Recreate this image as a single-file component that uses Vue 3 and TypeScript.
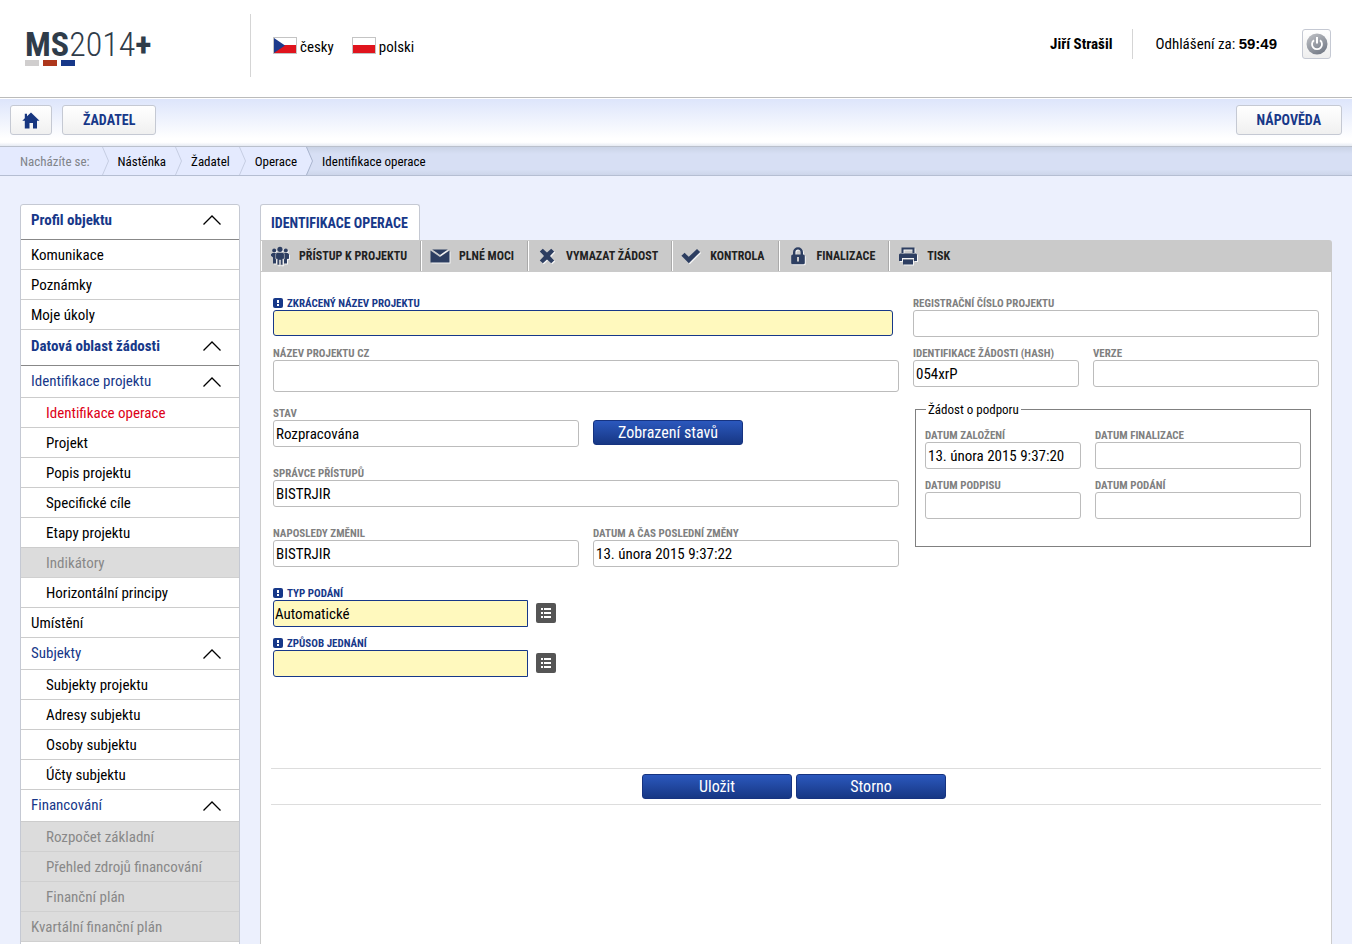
<script setup lang="ts">
import { ref } from 'vue'

type RowKind = 'section' | 'group' | 'item' | 'sub'
interface NavRow {
  text: string
  kind: RowKind
  disabled?: boolean
  active?: boolean
}

const nav: NavRow[] = [
  { text: 'Profil objektu', kind: 'section' },
  { text: 'Komunikace', kind: 'item' },
  { text: 'Poznámky', kind: 'item' },
  { text: 'Moje úkoly', kind: 'item' },
  { text: 'Datová oblast žádosti', kind: 'section' },
  { text: 'Identifikace projektu', kind: 'group' },
  { text: 'Identifikace operace', kind: 'sub', active: true },
  { text: 'Projekt', kind: 'sub' },
  { text: 'Popis projektu', kind: 'sub' },
  { text: 'Specifické cíle', kind: 'sub' },
  { text: 'Etapy projektu', kind: 'sub' },
  { text: 'Indikátory', kind: 'sub', disabled: true },
  { text: 'Horizontální principy', kind: 'sub' },
  { text: 'Umístění', kind: 'item' },
  { text: 'Subjekty', kind: 'group' },
  { text: 'Subjekty projektu', kind: 'sub' },
  { text: 'Adresy subjektu', kind: 'sub' },
  { text: 'Osoby subjektu', kind: 'sub' },
  { text: 'Účty subjektu', kind: 'sub' },
  { text: 'Financování', kind: 'group' },
  { text: 'Rozpočet základní', kind: 'sub', disabled: true },
  { text: 'Přehled zdrojů financování', kind: 'sub', disabled: true },
  { text: 'Finanční plán', kind: 'sub', disabled: true },
  { text: 'Kvartální finanční plán', kind: 'item', disabled: true },
]

const tools = [
  { text: 'PŘÍSTUP K PROJEKTU', icon: 'people' },
  { text: 'PLNÉ MOCI', icon: 'mail' },
  { text: 'VYMAZAT ŽÁDOST', icon: 'cross' },
  { text: 'KONTROLA', icon: 'check' },
  { text: 'FINALIZACE', icon: 'lock' },
  { text: 'TISK', icon: 'print' },
]

const crumbs = ['Nástěnka', 'Žadatel', 'Operace']

const form = ref({
  shortName: '',
  nameCz: '',
  state: 'Rozpracována',
  manager: 'BISTRJIR',
  changedBy: 'BISTRJIR',
  changedAt: '13. února 2015 9:37:22',
  submission: 'Automatické',
  acting: '',
  regNumber: '',
  hash: '054xrP',
  version: '',
  created: '13. února 2015 9:37:20',
  finalized: '',
  signed: '',
  submitted: '',
})
</script>

<template>
  <div class="page">
    <header class="top">
      <a class="logo" href="#" aria-label="MS2014+">
        <span class="logo-text"><b>MS</b><span class="thin">2014</span><b>+</b></span>
        <span class="bars"><i class="bar grey"></i><i class="bar red"></i><i class="bar blue"></i></span>
      </a>
      <div class="langs">
        <a href="#" class="lang">
          <svg width="24" height="17" viewBox="0 0 24 17" aria-hidden="true">
            <rect x=".5" y=".5" width="23" height="16" fill="#fff" stroke="#c4c4c4" />
            <rect x="1" y="8" width="22" height="8" fill="#e0141d" />
            <path d="M1 1 12 8.500 1 16Z" fill="#1c3a8c" />
          </svg>
          <span>česky</span>
        </a>
        <a href="#" class="lang">
          <svg width="24" height="17" viewBox="0 0 24 17" aria-hidden="true">
            <rect x=".5" y=".5" width="23" height="16" fill="#fff" stroke="#c4c4c4" />
            <rect x="1" y="8" width="22" height="8" fill="#e0141d" />
          </svg>
          <span>polski</span>
        </a>
      </div>
      <div class="user">
        <b class="user-name">Jiří Strašil</b>
        <span class="timer">Odhlášení za: <b class="clock">59:49</b></span>
        <button type="button" class="power" aria-label="Odhlásit">
          <svg width="22" height="22" viewBox="0 0 22 22" aria-hidden="true">
            <defs>
              <linearGradient id="pw" x1="0" y1="0" x2="0.600" y2="1">
                <stop offset="0" stop-color="#c3c5c9" />
                <stop offset="1" stop-color="#777d89" />
              </linearGradient>
            </defs>
            <circle cx="11" cy="11" r="10.500" fill="url(#pw)" />
            <path d="M8 7.200A5 5 0 1 0 14 7.200" fill="none" stroke="#fff" stroke-width="1.800" />
            <path d="M11 4v6.500" stroke="#fff" stroke-width="2" />
          </svg>
        </button>
      </div>
    </header>

    <nav class="menu">
      <button type="button" class="menu-btn home" aria-label="Domů">
        <svg width="18" height="17" viewBox="0 0 18 17" aria-hidden="true">
          <path d="M9 .5 17.500 8.700H15V16.500H11V11H7.500V16.500H2.800V8.700H.3L2.800 6.200V1.800H5V4.200Z" fill="#173680" />
        </svg>
      </button>
      <button type="button" class="menu-btn">ŽADATEL</button>
      <button type="button" class="menu-btn help">NÁPOVĚDA</button>
    </nav>

    <nav class="crumbs" aria-label="Drobečková navigace">
      <span class="crumb lead">Nacházíte se:</span>
      <template v-for="c in crumbs" :key="c">
        <svg class="sep" width="7" height="28" viewBox="0 0 7 28" aria-hidden="true">
          <path d="M.5 0 6.500 14 .5 28" fill="none" stroke="#c6cde2" />
        </svg>
        <a href="#" class="crumb">{{ c }}</a>
      </template>
      <span class="current">
        <svg class="sep" width="7" height="28" viewBox="0 0 7 28" aria-hidden="true">
          <path d="M0 0 6.500 14 0 28Z" fill="#e4eafe" />
          <path d="M.5 0 6.500 14 .5 28" fill="none" stroke="#a9b4cd" />
        </svg>
        <span class="crumb">Identifikace operace</span>
      </span>
    </nav>

    <div class="body">
      <aside class="side">
        <a
          v-for="row in nav"
          :key="row.text"
          href="#"
          class="row"
          :class="[row.kind, { off: row.disabled, active: row.active }]"
        >
          <span>{{ row.text }}</span>
          <svg v-if="row.kind === 'section' || row.kind === 'group'" width="20" height="12" viewBox="0 0 20 12" aria-hidden="true">
            <path d="M1.500 10.500 10 2l8.500 8.500" fill="none" stroke="#000" stroke-width="1.300" />
          </svg>
        </a>
        <div class="row item"></div>
      </aside>

      <main class="main">
        <h1 class="tab">IDENTIFIKACE OPERACE</h1>
        <div class="toolbar">
          <button v-for="t in tools" :key="t.text" type="button" class="tool">
            <svg width="20" height="20" viewBox="0 0 20 20" class="tool-icon" aria-hidden="true">
              <g v-if="t.icon === 'people'">
                <circle cx="10" cy="3.300" r="2.600" />
                <circle cx="4.200" cy="4.500" r="2" />
                <circle cx="15.800" cy="4.500" r="2" />
                <path d="M1 8.200 2.500 7H6v10.500H3V11.500L1 9.800ZM14 7h3.500L19 8.200v4.500L17 13v4.500H14Z" />
                <path d="M6.800 6.500h6.400l1.200 1.500v5H12.800v6H10.600v-5H9.400v5H7.200v-6H5.600V8Z" stroke="#cacaca" stroke-width=".6" />
              </g>
              <g v-else-if="t.icon === 'mail'">
                <path d="M.5 4.500 10 11l9.500-6.500v12H.5Z" />
                <path d="M2.200 3.500h15.600L10 8.900Z" />
              </g>
              <path v-else-if="t.icon === 'cross'" d="M2.800 5.600 5.800 2.700 10 6.600l4.200-3.900 3 2.900L13 10l4.200 4.400-3 2.900L10 13.400l-4.200 3.900-3-2.900L7 10Z" />
              <path v-else-if="t.icon === 'check'" d="M.4 9.800 3.600 6.800 7.800 10.800 16 2.900l3.200 3L7.800 17.200Z" />
              <g v-else-if="t.icon === 'lock'">
                <path d="M6.200 9V6.200a3.800 3.800 0 0 1 7.600 0V9" fill="none" stroke="#2d3e61" stroke-width="2.400" />
                <rect x="3.200" y="8.500" width="13.600" height="9.800" rx="1.500" />
                <path d="M9 11h2v4.500H9Z" fill="#cacaca" />
              </g>
              <g v-else>
                <path d="M4.500 7V2.500h11V7" fill="none" stroke="#2d3e61" stroke-width="2" />
                <path d="M2 7.500h16l1 1V15h-3v-3H4v3H1V8.500Z" />
                <rect x="5" y="13.500" width="10" height="5" />
              </g>
            </svg>
            <span>{{ t.text }}</span>
          </button>
        </div>

        <form class="panel" @submit.prevent>
          <div class="cols">
            <div class="left">
              <div class="field narrowed">
                <label class="req" for="shortName"><i class="mark"></i>ZKRÁCENÝ NÁZEV PROJEKTU</label>
                <input id="shortName" v-model="form.shortName" class="need low" type="text" />
              </div>
              <div class="field tall">
                <label for="nameCz">NÁZEV PROJEKTU CZ</label>
                <textarea id="nameCz" v-model="form.nameCz" rows="1"></textarea>
              </div>
              <div class="pair tall">
                <div class="field">
                  <label for="state">STAV</label>
                  <input id="state" v-model="form.state" type="text" />
                </div>
                <button type="button" class="primary state-btn">Zobrazení stavů</button>
              </div>
              <div class="field tall">
                <label for="manager">SPRÁVCE PŘÍSTUPŮ</label>
                <input id="manager" v-model="form.manager" type="text" />
              </div>
              <div class="pair tall">
                <div class="field">
                  <label for="changedBy">NAPOSLEDY ZMĚNIL</label>
                  <input id="changedBy" v-model="form.changedBy" type="text" />
                </div>
                <div class="field">
                  <label for="changedAt">DATUM A ČAS POSLEDNÍ ZMĚNY</label>
                  <input id="changedAt" v-model="form.changedAt" type="text" />
                </div>
              </div>
              <div class="field">
                <label class="req" for="submission"><i class="mark"></i>TYP PODÁNÍ</label>
                <div class="pick">
                  <input id="submission" v-model="form.submission" class="need" type="text" />
                  <button type="button" class="list-btn" aria-label="Vybrat typ podání">
                    <svg width="20" height="20" viewBox="0 0 20 20" aria-hidden="true">
                      <path d="M5 5h2v2H5zM8 5h7v2H8zM5 9h2v2H5zM8 9h7v2H8zM5 13h2v2H5zM8 13h7v2H8z" fill="#fff" />
                    </svg>
                  </button>
                </div>
              </div>
              <div class="field">
                <label class="req" for="acting"><i class="mark"></i>ZPŮSOB JEDNÁNÍ</label>
                <div class="pick">
                  <input id="acting" v-model="form.acting" class="need" type="text" />
                  <button type="button" class="list-btn" aria-label="Vybrat způsob jednání">
                    <svg width="20" height="20" viewBox="0 0 20 20" aria-hidden="true">
                      <path d="M5 5h2v2H5zM8 5h7v2H8zM5 9h2v2H5zM8 9h7v2H8zM5 13h2v2H5zM8 13h7v2H8z" fill="#fff" />
                    </svg>
                  </button>
                </div>
              </div>
            </div>

            <div class="right">
              <div class="field">
                <label for="regNumber">REGISTRAČNÍ ČÍSLO PROJEKTU</label>
                <input id="regNumber" v-model="form.regNumber" type="text" />
              </div>
              <div class="split">
                <div class="field">
                  <label for="hash">IDENTIFIKACE ŽÁDOSTI (HASH)</label>
                  <input id="hash" v-model="form.hash" type="text" />
                </div>
                <div class="field">
                  <label for="version">VERZE</label>
                  <input id="version" v-model="form.version" type="text" />
                </div>
              </div>
              <fieldset class="request">
                <legend>Žádost o podporu</legend>
                <div class="dates">
                  <div class="field">
                    <label for="created">DATUM ZALOŽENÍ</label>
                    <input id="created" v-model="form.created" type="text" />
                  </div>
                  <div class="field">
                    <label for="finalized">DATUM FINALIZACE</label>
                    <input id="finalized" v-model="form.finalized" type="text" />
                  </div>
                  <div class="field">
                    <label for="signed">DATUM PODPISU</label>
                    <input id="signed" v-model="form.signed" type="text" />
                  </div>
                  <div class="field">
                    <label for="submitted">DATUM PODÁNÍ</label>
                    <input id="submitted" v-model="form.submitted" type="text" />
                  </div>
                </div>
              </fieldset>
            </div>
          </div>
          <div class="actions">
            <button type="submit" class="primary">Uložit</button>
            <button type="button" class="primary">Storno</button>
          </div>
        </form>
      </main>
    </div>
  </div>
</template>

<style>
html,
body,
#app {
  height: 100%;
}
body {
  margin: 0;
  overflow: hidden;
  background: #ecf0fd;
}
</style>

<style scoped>
.page {
  display: flex;
  flex-direction: column;
  min-height: 100%;
  font-family: "Roboto Condensed", "Liberation Sans Narrow", Roboto, sans-serif;
  font-size: 15px;
  line-height: 20px;
  color: #000;
}
.page * {
  box-sizing: border-box;
}
a {
  color: inherit;
  text-decoration: none;
}
button,
input,
textarea {
  font: inherit;
  color: inherit;
  margin: 0;
}
svg {
  display: block;
  flex: none;
}

.top {
  display: flex;
  align-items: center;
  height: 98px;
  padding: 0 21px 0 25px;
  background: #fff;
  border-bottom: 1px solid #bbb;
}
.logo {
  display: block;
  width: 225px;
  margin-bottom: 3px;
  color: #2f3c4a;
}
.logo-text {
  display: block;
  font-size: 34px;
  line-height: 31px;
}
.thin {
  font-weight: 300;
}
.bars {
  display: flex;
  gap: 4px;
}
.bar {
  width: 14px;
  height: 6px;
}
.grey { background: #d0cece; }
.red { background: #ae371c; }
.blue { background: #173889; }
.langs {
  display: flex;
  align-items: center;
  gap: 18px;
  height: 63px;
  margin-bottom: 6px;
  padding-left: 22px;
  border-left: 1px solid #d5d5d5;
}
.lang {
  display: flex;
  align-items: center;
  gap: 3px;
}
.lang span {
  padding-top: 2px;
}
.user {
  display: flex;
  align-items: center;
  margin: 0 0 10px auto;
}
.timer {
  margin-left: 20px;
  padding-left: 22px;
  border-left: 1px solid #d5d5d5;
  line-height: 30px;
}
.clock {
  font-family: "Liberation Sans", Arial, sans-serif;
}
.power {
  display: flex;
  align-items: center;
  justify-content: center;
  width: 29px;
  height: 30px;
  margin-left: 25px;
  padding: 0;
  border: 1px solid #c5c9d3;
  border-radius: 3px;
  background: linear-gradient(#fff, #eee);
}

.menu {
  display: flex;
  gap: 10px;
  height: 49px;
  padding: 6px 10px 0;
  border-top: 1px solid #fff;
  border-bottom: 1px solid #bac0cc;
  background: linear-gradient(#dde5fb, #fff 84%, #fff 92%, #e6eaf3);
}
.menu-btn {
  height: 30px;
  padding: 0 20px;
  border: 1px solid #c5c9d3;
  border-radius: 3px;
  background: linear-gradient(#fff, #f0f0f0);
  color: #173889;
  font-size: 14px;
  font-weight: 700;
}
.home {
  padding: 0 11px;
}
.help {
  margin-left: auto;
}

.crumbs {
  display: flex;
  height: 29px;
  padding-left: 20px;
  border-bottom: 1px solid #b5bed2;
  background: #e4eafe;
  font-size: 13px;
  line-height: 29px;
}
.crumb {
  padding: 0 9px;
}
.lead {
  padding: 0 12px 0 0;
  color: #808489;
}
.current {
  display: flex;
  flex: 1;
  background: linear-gradient(#cad3e6, #d7dff4 25%, #d7dff4 80%, #cdd6ea);
}

.body {
  display: flex;
  flex: 1;
  align-items: stretch;
  gap: 20px;
  padding: 28px 20px 0;
}
.side {
  flex: 0 0 220px;
  border: 1px solid #c5c9d3;
  border-radius: 3px 3px 0 0;
  background: #fff;
}
.row {
  display: flex;
  justify-content: space-between;
  height: 30px;
  padding: 0 17px 0 10px;
  border-bottom: 1px solid #ccc;
  line-height: 30px;
}
.row svg {
  margin-top: 10px;
}
.section {
  height: 36px;
  padding-top: 1px;
  border-color: #888;
  color: #173889;
  font-weight: 700;
}
.section svg {
  margin-top: 9px;
}
.section:first-child {
  height: 35px;
  padding-top: 0;
}
.group {
  height: 32px;
  color: #173889;
}
.sub {
  padding-left: 25px;
}
.active {
  color: #dd0018;
}
.off {
  background: #dcdcdc;
  color: #888;
  border-color: #d0d0d0;
}

.main {
  display: flex;
  flex: 1;
  flex-direction: column;
  align-items: stretch;
  min-width: 0;
}
.tab {
  align-self: flex-start;
  height: 36px;
  margin: 0;
  padding: 0 11px 0 10px;
  border: 1px solid #c5c9d3;
  border-bottom: 0;
  border-radius: 3px 3px 0 0;
  background: #fff;
  color: #173889;
  font-size: 14px;
  line-height: 36px;
}
.toolbar {
  display: flex;
  height: 32px;
  padding: 1px 0 1px 1px;
  border-radius: 0 3px 0 0;
  background: #cacaca;
}
.tool {
  display: flex;
  align-items: center;
  gap: 9px;
  padding: 0 13px 0 8px;
  border: 0;
  border-left: 1px solid #fff;
  border-right: 1px solid #aaa;
  background: none;
  color: #222;
  font-size: 12px;
  font-weight: 700;
}
.tool:last-child {
  border-right: 0;
}
.tool-icon {
  fill: #2d3e61;
  filter: drop-shadow(1px 1px 0 #f4f4f4);
}
.panel {
  flex: 1;
  padding: 24px 10px 0;
  border: 1px solid #ccc;
  border-top: 0;
  background: #fff;
}
.cols {
  display: grid;
  grid-template-columns: 626fr 406fr;
  gap: 14px;
  min-height: 472px;
  padding: 0 2px;
}
.left {
  display: flex;
  flex-direction: column;
}
.field {
  display: flex;
  flex-direction: column;
  min-height: 50px;
  min-width: 0;
}
.tall {
  min-height: 60px;
}
.narrowed {
  padding-right: 6px;
}
.pair,
.split,
.dates {
  display: grid;
  align-items: start;
  gap: 0 14px;
}
.pair {
  grid-template-columns: 1fr 1fr;
}
.split {
  grid-template-columns: 166fr 226fr;
}
.dates {
  grid-template-columns: 156fr 206fr;
}
label {
  display: flex;
  align-items: flex-start;
  gap: 4px;
  height: 14px;
  color: #808080;
  font-size: 11px;
  font-weight: 700;
  line-height: 16px;
  white-space: nowrap;
}
.req {
  color: #173889;
}
.mark {
  width: 10px;
  height: 10px;
  margin-top: 2px;
  border-radius: 2px;
  background:
    linear-gradient(#fff, #fff) 4px 2px / 2px 3px no-repeat,
    linear-gradient(#fff, #fff) 4px 6px / 2px 2px no-repeat,
    #173889;
}
input,
textarea {
  width: 100%;
  height: 27px;
  padding: 0 2px;
  border: 1px solid #bcbcbc;
  border-radius: 3px;
  background: #fff;
  outline: 0;
}
textarea {
  height: 32px;
  resize: none;
  overflow: hidden;
}
.need {
  border-color: #173889;
  background: #fff9be;
}
.low {
  height: 26px;
}
.pick {
  display: flex;
  align-items: flex-start;
  gap: 8px;
}
.pick input {
  width: 255px;
  padding: 0 1px;
  border-radius: 3px 0 0 3px;
}
.list-btn {
  width: 20px;
  height: 20px;
  margin-top: 3px;
  padding: 0;
  border: 0;
  border-radius: 2px;
  background: #555;
}
.primary {
  width: 150px;
  height: 25px;
  padding: 1px 0 0;
  border: 1px solid #163380;
  border-radius: 3px;
  background: linear-gradient(#2b58bd, #173784);
  color: #fff;
  font-size: 16px;
  line-height: 22px;
}
.state-btn {
  margin-top: 14px;
}
.request {
  min-width: 0;
  height: 147px;
  margin: 4px 8px 0 2px;
  padding: 10px 9px 0;
  border: 1px solid #808080;
}
legend {
  margin-left: 1px;
  padding: 2px 2px 0;
  font-size: 13px;
  line-height: 16px;
}
.actions {
  display: flex;
  justify-content: center;
  gap: 4px;
  padding: 5px 4px 5px 0;
  border: solid #ddd;
  border-width: 1px 0;
}
</style>
